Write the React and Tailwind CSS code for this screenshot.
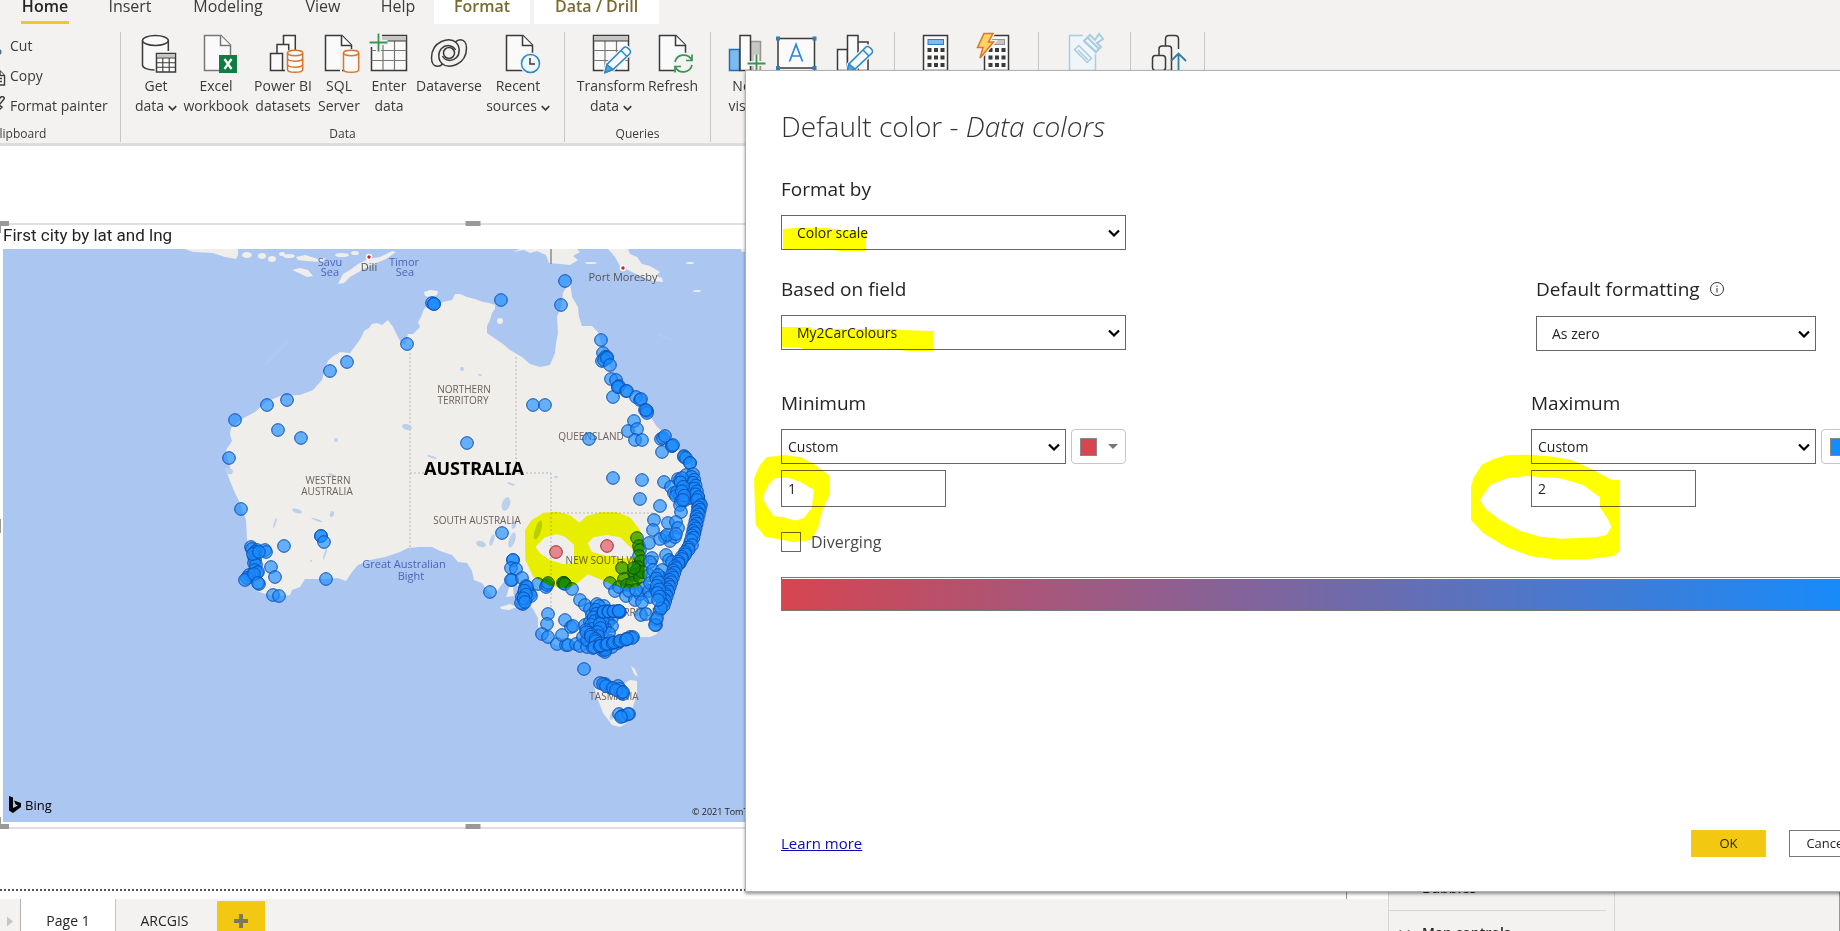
import React from "react";

const INK = "#3b3a39";
const GREEN = "#3a9455";
const BLUE = "#2b88c8";
const ORANGE = "#d9762b";

/* ---------- ribbon icons ---------- */

function Icon({ children }) {
  return (
    <svg viewBox="0 0 40 40" className="h-10 w-10 shrink-0 overflow-visible" fill="none" stroke={INK} strokeWidth="1.5" aria-hidden="true">
      {children}
    </svg>
  );
}

function Doc({ x = 6, stroke = INK }) {
  return (
    <g transform={`translate(${x} 0)`} stroke={stroke} fill="#fafafa">
      <path d="M0.5 2.5H17L26.500 12V37.500H0.500Z" />
      <path d="M16.500 2.500V12.500H26.500" />
    </g>
  );
}

function Cylinder({ bands }) {
  return (
    <g stroke={ORANGE} fill="#fbfaf8">
      <path d="M24.500 20V36.500C24.500 38.300 28 39.300 32 39.300S39.700 38.300 39.700 36.500V20" />
      <ellipse cx="32.100" cy="20" rx="7.600" ry="2.700" />
      {bands && <path d="M24.500 25.500C25 29 39 29 39.700 25.500M24.500 31.500C25 35 39 35 39.700 31.500" fill="none" />}
    </g>
  );
}

function Grid() {
  return (
    <g>
      <rect x="2.500" y="2.500" width="35" height="35" fill="#fafafa" />
      <rect x="3" y="3" width="34" height="5" fill="#c8c6c4" stroke="none" />
      <path d="M2.500 17.500H37.500M2.500 27.500H37.500M14 8V37M25.500 8V37" stroke="#797775" strokeWidth="1.200" />
      <path d="M2.500 8H37.500" strokeWidth="1" />
    </g>
  );
}

function Pencil({ x = 14, y = 39.5 }) {
  return (
    <g transform={`translate(${x} ${y})`}>
      <path d="M0 0L2 -8L19 -25C21 -27 27 -22 25 -19L8 -3Z" fill="#f3f2f1" stroke="#f3f2f1" strokeWidth="4" />
      <path d="M0 0L2 -8L19 -25C21 -27 27 -22 25 -19L8 -3Z" fill="#f4faff" stroke={BLUE} />
      <path d="M0 0L2 -8L8 -3Z" fill="#5aa5de" stroke={BLUE} />
      <path d="M16 -22L22 -16" stroke={BLUE} />
    </g>
  );
}

function Plus({ x, y }) {
  return (
    <g transform={`translate(${x} ${y})`}>
      <path d="M-9 0H9M0 -9V9" stroke="#f3f2f1" strokeWidth="5" />
      <path d="M-9 0H9M0 -9V9" stroke={GREEN} strokeWidth="1.800" />
    </g>
  );
}

function Keys({ x }) {
  return (
    <g fill={INK} stroke="none">
      {[15, 22.5, 30].map((y) => [0, 6.5, 13].map((dx) => <rect key={`${y}-${dx}`} x={x + dx} y={y} width="4" height="4" />))}
    </g>
  );
}

const swirl = "M27.500 9.500C23 6 17 6.500 12.500 8.500C6 11.500 2.500 18 2.500 25C2.500 30 5 33.300 8.500 33.300C10.500 33.300 12.500 32.300 13.500 31C8.500 27 9 19 12.500 15.500C17 11 24 12 26.500 17";

const icons = {
  getData: (
    <Icon>
      <path d="M6.500 7.500V32C6.500 35 12 37 19 37H32.300V7.500" fill="#fafafa" stroke="none" />
      <path d="M18.500 37C12 37 6.500 35 6.500 32V7.500M32.300 7.500V18" />
      <ellipse cx="19.400" cy="7.500" rx="12.900" ry="5" fill="#fafafa" />
      <rect x="20.500" y="20.500" width="19" height="18.500" fill="#fff" />
      <rect x="21" y="21" width="18" height="3.500" fill="#c8c6c4" stroke="none" />
      <path d="M20.500 25H39.500M20.500 29.700H39.500M20.500 34.300H39.500M26.800 25V39M33.200 25V39" strokeWidth="1.100" />
    </Icon>
  ),
  excel: (
    <Icon>
      <Doc x={8} stroke="#797775" />
      <rect x="23" y="22" width="18" height="18" fill="#107c41" stroke="none" />
      <path d="M28.500 26L35.500 36M35.500 26L28.500 36" stroke="#fff" strokeWidth="2.200" />
    </Icon>
  ),
  powerBi: (
    <Icon>
      <path d="M20.500 11V2.500H32.300V17" fill="#fafafa" />
      <path d="M14 20V11.500H25.700V17" fill="#fafafa" />
      <path d="M22 37.500H7.500V20.500H19.500V37.500" fill="#fafafa" />
      <Cylinder bands />
    </Icon>
  ),
  sql: (
    <Icon>
      <Doc />
      <path d="M22 41V17H34" stroke="#f3f2f1" strokeWidth="2" />
      <Cylinder />
    </Icon>
  ),
  enter: (
    <Icon>
      <Grid />
      <rect x="0" y="0" width="13" height="14" fill="#f3f2f1" stroke="none" />
      <Plus x={9.5} y={9.5} />
    </Icon>
  ),
  dataverse: (
    <Icon>
      <path d={swirl} />
      <path d={swirl} transform="rotate(180 20 20)" />
      <circle cx="20" cy="20" r="5.500" />
    </Icon>
  ),
  recent: (
    <Icon>
      <Doc x={8} />
      <circle cx="32.500" cy="30.500" r="11" fill="#f3f2f1" stroke="none" />
      <circle cx="32.500" cy="30.500" r="9" fill="#eef7fd" stroke={BLUE} />
      <path d="M32 25V31H37" />
    </Icon>
  ),
  transform: (
    <Icon>
      <Grid />
      <Pencil />
    </Icon>
  ),
  refresh: (
    <Icon>
      <Doc />
      <circle cx="30.500" cy="30.500" r="11" fill="#f3f2f1" stroke="none" />
      <path d="M22 29A9 9 0 0 1 38.500 26.500M39 21.500V27.500H33M39 32A9 9 0 0 1 22.500 34.500M22 39.500V33.500H28" stroke={GREEN} strokeWidth="1.700" />
    </Icon>
  ),
  newVisual: (
    <Icon>
      <rect x="2.500" y="16.500" width="10" height="21" fill="#7dbbee" stroke="#1f6fb2" />
      <rect x="23.500" y="8.500" width="10" height="29" fill="#c8c6c4" stroke="#979593" />
      <rect x="13" y="2.500" width="10.500" height="35" fill="#fafafa" />
      <Plus x={29.5} y={30.5} />
    </Icon>
  ),
  textBox: (
    <Icon>
      <rect x="2" y="5.500" width="36.500" height="29.500" fill="#fafafa" />
      <path d="M13.500 28.500L20 11.500L26.500 28.500M16 23H24" stroke="#2b88d8" strokeWidth="1.700" />
      <g fill="#2f7fb5" stroke="none">
        <rect x="0" y="3.500" width="4" height="4" />
        <rect x="36.500" y="3.500" width="4" height="4" />
        <rect x="0" y="33" width="4" height="4" />
        <rect x="36.500" y="33" width="4" height="4" />
      </g>
    </Icon>
  ),
  editVisual: (
    <Icon>
      <rect x="2.500" y="16.500" width="10" height="21" fill="#fafafa" />
      <rect x="22.500" y="9" width="10.500" height="28.500" fill="#fafafa" />
      <rect x="12.500" y="2.500" width="10.500" height="35" fill="#fafafa" />
      <Pencil x={12} y={39} />
    </Icon>
  ),
  measure: (
    <Icon>
      <rect x="8.500" y="2.500" width="24" height="35" fill="#fafafa" />
      <rect x="13" y="6.500" width="15.500" height="5" fill="#7dbbee" stroke="#2b7cd3" strokeWidth="1" />
      <Keys x={12.5} />
    </Icon>
  ),
  quick: (
    <Icon>
      <rect x="11.500" y="2.500" width="24" height="35" fill="#fafafa" />
      <rect x="16" y="6.500" width="15.500" height="5" fill="#c8c6c4" stroke="#979593" strokeWidth="1" />
      <Keys x={15.5} />
      <path d="M11 0.500H20L15.500 9H20.500L7 25L10 14.500H4.500Z" fill="#f3f2f1" stroke="#f3f2f1" strokeWidth="4" />
      <path d="M11 0.500H20L15.500 9H20.500L7 25L10 14.500H4.500Z" fill="#fdd267" stroke={ORANGE} />
    </Icon>
  ),
  sensitivity: (
    <Icon>
      <g stroke="#a9cde0">
        <path d="M17 2.500H3.500V37.500H29.500V21" fill="#eff5f8" />
        <rect x="-9" y="-3" width="18" height="6" transform="translate(17 21) rotate(45)" fill="#eff5f8" />
        <path d="M12 17L22 27" />
        <path d="M18 8L24 2L29 7L33 1L37 6L31 10L35 14L30 19Z" fill="#eff5f8" strokeWidth="2" />
        <path d="M18 8L30 19M22 5L33 16" strokeWidth="2" />
      </g>
    </Icon>
  ),
  publish: (
    <Icon>
      <path d="M16.500 13V6C16.500 4 18 2.500 20 2.500H26C28 2.500 29.500 4 29.500 6V16" />
      <path d="M10 22V16C10 14.500 11 13 13 13H19.500C21.500 13 22.500 14.500 22.500 16V37.500" />
      <rect x="3.500" y="22.500" width="13" height="15" rx="3" />
      <path d="M16.500 37.500H22.500" />
      <path d="M29.500 39V20.500M22 28L29.500 20.500L37 28" stroke="#2f7fa8" strokeWidth="1.800" />
    </Icon>
  ),
};

function Chevron({ className }) {
  return (
    <svg viewBox="0 0 12 8" className={className} fill="none" stroke="currentColor" strokeWidth="2.200" aria-hidden="true">
      <path d="M1 1.500L6 6.500L11 1.500" />
    </svg>
  );
}

/* ---------- ribbon ---------- */

function Tool({ icon, name, lines = [], menu, width }) {
  return (
    <button type="button" aria-label={name} className={`flex flex-col items-center ${width}`}>
      {icons[icon]}
      <span className="mt-[3px] flex flex-col items-center whitespace-nowrap text-sm leading-5">
        {lines.map((line, i) => (
          <span key={line} className="flex items-center gap-1">
            {line}
            {menu && i === lines.length - 1 && <Chevron className="mt-1 h-[6px] w-[9px]" />}
          </span>
        ))}
      </span>
    </button>
  );
}

function Group({ caption, className, inset, children }) {
  return (
    <section className={`flex shrink-0 flex-col border-r border-[#c8c6c4] ${className}`}>
      <div className={`flex h-[94px] items-start pt-px ${inset}`}>{children}</div>
      {caption && <p className="whitespace-nowrap text-center text-xs leading-4">{caption}</p>}
    </section>
  );
}

const tabs = [
  { name: "Home", style: "ml-[21px] w-12 font-semibold border-b-3 border-[#ebc92b] text-[#252423]" },
  { name: "Insert", style: "ml-[38px] w-[46px]" },
  { name: "Modeling", style: "ml-[38px] w-[74px]" },
  { name: "View", style: "ml-[39px] w-[38px]" },
  { name: "Help", style: "ml-[38px] w-[36px]" },
  { name: "Format", style: "ml-[18px] w-24 bg-white font-semibold text-[#7a6a30]" },
  { name: "Data / Drill", style: "ml-1 w-[125px] bg-white font-semibold text-[#7a6a30]" },
];

function Ribbon() {
  return (
    <header className="shrink-0 overflow-hidden border-b-3 border-[#dddcdb] bg-[#f3f2f1] text-[#3b3a39]">
      <nav className="flex h-6 items-start">
        {tabs.map((t) => (
          <button key={t.name} type="button" className={`flex h-6 shrink-0 items-start justify-center whitespace-nowrap text-base leading-3 ${t.style}`}>
            {t.name}
          </button>
        ))}
      </nav>
      <div className="flex h-[119px] pt-2 pb-px">
        <section className="flex w-[121px] shrink-0 flex-col border-r border-[#c8c6c4] text-sm">
          <div className="-ml-3.5 flex h-[94px] flex-col items-start">
            <button type="button" className="flex h-7 items-center gap-1 pr-2">
              <svg viewBox="0 0 20 20" className="h-5 w-5" fill="none" aria-hidden="true">
                <path d="M4 2L11 12M12 2L5 12" stroke={INK} strokeWidth="1.400" />
                <circle cx="12.500" cy="16" r="2.300" stroke="#4d6f94" strokeWidth="1.600" />
              </svg>
              Cut
            </button>
            <button type="button" className="flex h-8 items-center gap-1 pr-2">
              <svg viewBox="0 0 20 20" className="h-5 w-5" fill="#fff" stroke={INK} strokeWidth="1.400" aria-hidden="true">
                <path d="M2 1H10V14H2Z" />
                <path d="M8 5H14L18.500 9.500V19H8Z" />
                <path d="M14 5V9.500H18.500M11 12.500H16M11 15.500H16" />
              </svg>
              Copy
            </button>
            <button type="button" className="flex h-7 items-center gap-1 whitespace-nowrap">
              <svg viewBox="0 0 20 20" className="h-5 w-5" fill="none" stroke={INK} strokeWidth="1.500" aria-hidden="true">
                <path d="M10 7L15 1C16 0 19 1 18 3L13 9M9 6L16 11L11 16C8 18 5 15 4 13Z" />
              </svg>
              Format painter
            </button>
          </div>
          <p className="-ml-2 text-xs leading-4">Clipboard</p>
        </section>
        <Group caption="Data" className="w-[444px]" inset="pl-2">
          <Tool icon="getData" lines={["Get", "data"]} menu width="w-[54px]" />
          <Tool icon="excel" lines={["Excel", "workbook"]} width="w-[66px]" />
          <Tool icon="powerBi" lines={["Power BI", "datasets"]} width="w-[68px]" />
          <Tool icon="sql" lines={["SQL", "Server"]} width="w-11" />
          <Tool icon="enter" lines={["Enter", "data"]} width="w-14" />
          <Tool icon="dataverse" lines={["Dataverse"]} width="w-16" />
          <Tool icon="recent" lines={["Recent", "sources"]} menu width="w-[74px]" />
        </Group>
        <Group caption="Queries" className="w-[146px]" inset="pl-[13px]">
          <Tool icon="transform" lines={["Transform", "data"]} menu width="w-[66px]" />
          <Tool icon="refresh" lines={["Refresh"]} width="w-[58px]" />
        </Group>
        <Group className="w-[184px]" inset="pl-[9px]">
          <Tool icon="newVisual" lines={["New", "visual"]} width="w-[54px]" />
          <Tool icon="textBox" name="Text box" width="w-11" />
          <Tool icon="editVisual" name="More visuals" width="w-[74px]" />
        </Group>
        <Group className="w-[144px]" inset="pl-[11px]">
          <Tool icon="measure" name="New measure" width="w-[58px]" />
          <Tool icon="quick" name="Quick measure" width="w-[58px]" />
        </Group>
        <Group className="w-[92px]" inset="pl-2">
          <Tool icon="sensitivity" name="Sensitivity" width="w-[78px]" />
        </Group>
        <Group className="w-[74px]" inset="pl-2">
          <Tool icon="publish" name="Publish" width="w-[60px]" />
        </Group>
      </div>
    </header>
  );
}

/* ---------- map ---------- */

const mainland =
  "231 428 240 420 255 412 266 402 280 396 300 395 313 390 322 380 325 368 328 361 332 357 340 352 350 353 356 345 361 338 364 331 369 328 372 324 377 323 382 325 388 320 393 327 396 333 400 341 405 345 408 334 413 334 417 330 420 327 418 322 421 317 424 309 430 305 437 304 443 302 452 300 455 294 460 294 467 297 475 299 483 302 489 303 495 305 495 309 492 313 490 320 487 326 487 333 497 340 503 344 510 350 522 357 530 364 540 367 550 365 555 353 556 343 558 333 557 317 561 307 563 293 567 286 570 282 572 297 578 307 579 317 582 326 592 326 598 332 603 350 607 362 612 372 617 380 628 389 637 397 644 405 650 416 657 427 662 431 670 440 680 453 690 460 694 477 698 493 704 503 702 512 697 530 690 550 680 567 670 590 662 610 658 627 657 634 650 637 640 637 627 643 618 645 612 651 607 653 598 648 590 647 585 643 580 650 573 647 560 647 552 643 545 638 538 627 538 618 533 609 529 605 521 608 516 603 519 594 517 582 513 588 514 596 506 597 509 588 509 578 504 582 499 588 496 594 492 596 487 590 482 583 474 580 472 571 467 563 458 562 452 555 440 551 432 547 420 547 408 548 400 552 385 557 370 560 358 565 352 572 346 581 338 578 327 579 305 579 300 587 292 590 290 595 277 597 262 593 255 590 254 580 257 570 252 556 247 540 246 520 240 503 235 493 230 481 226 470 232 474 228 460 226 450 232 441 230 434";

const otherLand = [
  "185 249 193 252 213 253 225 257 236 259 238 255 238 249",
  "513 252 524 250 530 253 537 251 546 255 549 263 560 264 570 265 578 260 573 256 580 252 577 249 520 249",
  "608 249 615 257 620 266 630 271 640 276 653 281 663 282 662 278 656 276 660 272 650 266 642 264 637 257 630 254 628 249",
  "338 284 343 274 350 270 358 264 368 259 380 257 392 251 396 252 386 259 374 264 362 270 350 277 344 283",
  "292 270 300 268 308 270 313 276 307 277 299 273",
  "296 257 305 255 318 259 326 258 322 262 306 261 298 260",
  "424 292 430 290 438 291 437 295 430 297 425 296",
  "500 607 510 604 517 607 509 610 501 609",
  "594 680 600 684 610 686 623 684 630 680 637 681 637 694 632 710 627 723 620 727 612 725 603 713 598 700 595 690",
  "631 666 635 669 638 677 634 674",
];

const islands = [
  [247, 255, 5, 3], [262, 256, 4, 3], [272, 259, 4, 3], [282, 254, 3, 2], [289, 256, 6, 2], [342, 255, 7, 2],
  [355, 253, 4, 2], [500, 321, 3, 3], [591, 263, 6, 1], [690, 263, 4, 1], [697, 291, 4, 1], [744, 250, 3, 2],
];

const lakes = [
  [336, 440, 2, 2], [297, 511, 5, 2], [332, 514, 2, 3], [317, 520, 6, 1], [275, 523, 1, 5], [332, 475, 4, 1],
  [407, 427, 5, 3], [432, 457, 5, 1], [462, 369, 2, 2], [480, 375, 2, 1], [506, 504, 4, 7], [511, 484, 4, 1],
  [514, 525, 2, 4], [481, 544, 5, 3], [492, 540, 2, 6], [538, 530, 3, 10], [512, 540, 3, 8], [556, 477, 2, 1],
  [325, 554, 1, 6], [311, 561, 1, 1], [229, 471, 4, 3], [612, 716, 2, 4],
];

/* Dense runs of coastal markers, as [start, end, count]. */
const runs = [
  [[692, 474], [698, 500], 10],
  [[700, 505], [692, 540], 16],
  [[691, 545], [676, 566], 10],
  [[675, 568], [662, 608], 18],
  [[657, 575], [659, 600], 8],
  [[681, 478], [684, 500], 6],
  [[598, 606], [588, 640], 10],
  [[604, 612], [596, 640], 8],
  [[585, 630], [606, 650], 10],
  [[592, 648], [628, 639], 12],
  [[602, 612], [620, 611], 8],
  [[526, 587], [524, 602], 5],
  [[602, 684], [622, 692], 5],
];

const runDots = runs.flatMap(([[x1, y1], [x2, y2], n]) =>
  Array.from({ length: n }, (_, i) => {
    const t = i / (n - 1);
    const sway = i % 2 === 0 ? 1 : -1;
    return [x1 + (x2 - x1) * t + sway, y1 + (y2 - y1) * t];
  })
);

const blueDots = [
  [235, 420], [267, 405], [287, 400], [330, 371], [347, 362], [278, 430], [301, 438], [229, 458], [241, 509], [284, 546],
  [321, 536], [321, 536], [324, 542], [326, 579], [271, 567], [275, 577], [273, 595], [279, 596], [259, 584],
  [251, 547], [252, 549], [257, 550], [265, 550], [266, 552], [255, 552], [254, 557], [255, 560], [254, 563],
  [256, 565], [255, 570], [257, 573], [258, 572], [252, 575], [249, 575], [247, 578], [245, 580], [254, 574],
  [258, 583], [253, 554], [259, 552],
  [432, 303], [434, 304], [434, 304], [501, 300], [565, 281], [561, 305], [407, 344],
  [601, 340], [603, 353], [602, 361], [605, 357], [607, 357], [604, 360], [607, 358], [610, 365], [611, 379], [616, 380],
  [613, 397], [618, 387], [619, 386], [618, 387], [626, 391], [627, 391], [636, 397], [640, 400], [641, 399], [645, 410],
  [647, 411], [647, 413], [646, 410], [634, 421], [628, 431], [637, 429], [635, 440], [642, 440], [533, 405], [545, 405],
  [467, 443], [589, 439], [613, 478], [642, 480], [640, 499], [660, 506], [664, 482], [671, 487], [662, 452], [661, 439],
  [663, 438], [665, 436], [672, 446], [672, 446], [673, 445], [684, 456], [684, 457], [686, 458], [690, 463], [690, 463],
  [692, 483], [694, 490], [698, 497], [697, 500], [699, 505], [699, 508],
  [700, 503], [694, 495], [690, 498], [698, 502], [695, 497], [678, 479], [680, 480], [674, 493], [677, 492], [683, 493],
  [680, 495], [676, 496], [681, 501], [680, 505], [687, 492], [688, 488], [685, 500], [681, 512], [686, 475],
  [502, 533], [513, 560], [513, 560], [511, 568], [516, 569], [512, 580], [511, 580], [522, 578], [490, 592],
  [525, 588], [527, 590], [524, 593], [528, 596], [522, 597], [525, 600], [523, 604], [530, 594], [526, 586], [521, 603],
  [531, 596], [538, 584], [546, 587], [547, 585], [548, 583], [564, 583], [564, 583], [563, 583], [565, 584], [572, 589],
  [637, 538], [639, 546], [640, 550], [639, 556], [641, 561], [638, 567], [622, 568], [634, 573], [637, 570],
  [624, 579], [635, 575], [610, 583], [615, 591], [619, 587], [627, 585], [632, 583], [640, 577], [642, 572], [634, 568],
  [626, 596], [629, 591], [635, 600], [640, 594], [644, 588], [649, 591], [650, 597], [642, 602], [636, 590],
  [654, 520], [653, 530], [649, 543], [668, 523], [676, 522], [678, 528], [665, 537], [670, 541], [675, 537], [660, 539],
  [667, 535], [652, 558], [650, 562], [649, 575], [653, 570], [650, 583], [666, 555], [669, 560], [672, 562], [676, 534],
  [698, 507], [697, 516], [694, 530], [690, 543], [688, 548],
  [686, 552], [684, 556], [681, 560], [680, 563], [660, 610], [656, 620], [656, 625], [655, 625], [657, 618],
  [664, 590], [660, 580], [662, 570], [656, 590], [662, 578], [641, 615], [646, 614],
  [548, 614], [547, 624], [542, 634], [548, 637], [557, 644], [566, 645], [568, 645], [562, 635], [565, 620], [571, 627],
  [573, 626], [576, 644], [580, 646], [580, 600], [585, 605], [590, 609], [597, 604], [604, 606], [607, 611], [603, 615],
  [592, 615], [610, 612], [618, 611], [620, 612], [612, 618], [619, 612], [608, 622],
  [612, 626], [605, 628], [585, 625], [590, 622], [594, 640], [588, 640], [596, 633],
  [600, 632], [603, 637], [604, 646], [587, 647], [602, 650], [606, 649],
  [611, 641], [609, 633], [583, 637], [602, 625], [605, 652], [612, 647],
  [618, 643], [626, 639], [630, 637], [633, 637], [632, 638],
  [584, 669], [600, 683], [605, 684], [611, 688], [618, 686], [620, 689], [622, 692], [623, 694],
  [621, 693], [619, 714], [622, 716], [624, 716], [629, 714], [628, 714], [621, 717],
  ...runDots,
];

const redDots = [[556, 552], [607, 546]];

const mapLabels = [
  ["WESTERN", 328, 484, "state"], ["AUSTRALIA", 327, 495, "state"], ["NORTHERN", 464, 393, "state"], ["TERRITORY", 463, 404, "state"],
  ["QUEENSLAND", 591, 440, "state"], ["SOUTH AUSTRALIA", 477, 524, "state"], ["NEW SOUTH WALES", 612, 564, "state"],
  ["TERRITORY", 638, 616, "state"], ["TASMANIA", 614, 700, "state"],
  ["Savu", 330, 266, "sea"], ["Sea", 330, 276, "sea"], ["Timor", 404, 266, "sea"], ["Sea", 405, 276, "sea"],
  ["Great Australian", 404, 568, "sea"], ["Bight", 411, 580, "sea"],
  ["Dili", 369, 271, "town"], ["Port Moresby", 623, 281, "town"],
];

const labelStyle = {
  state: "fill-[#6b605c] text-[10px]",
  sea: "fill-[#4c63b8] text-[11px]",
  town: "fill-[#555555] text-[11px]",
};

function AustraliaMap() {
  return (
    <svg viewBox="3 249 942 573" preserveAspectRatio="xMinYMin slice" className="block h-[573px] w-full" role="img" aria-label="Map of Australia with city markers">
      <rect x="3" y="249" width="942" height="573" fill="#acc6f2" />
      <g fill="#efeeeb">
        <polygon points={mainland} />
        {otherLand.map((p) => <polygon key={p} points={p} />)}
        {islands.map(([x, y, rx, ry]) => <ellipse key={`${x}-${y}`} cx={x} cy={y} rx={rx} ry={ry} />)}
      </g>
      <g fill="#bccfeb">
        {lakes.map(([x, y, rx, ry]) => <ellipse key={`${x}-${y}`} cx={x} cy={y} rx={rx} ry={ry} transform={`rotate(18 ${x} ${y})`} />)}
      </g>
      <path d="M265 365L288 342M658 334L671 340" stroke="#b9cdec" />
      <path d="M410 345V550M516 357V473M410 473H551M551 473V645M551 513H652L668 520" fill="none" stroke="#c9c7c5" strokeDasharray="2 2" strokeWidth="1.500" />
      <path d="M551 249V264" stroke="#8f8a88" strokeWidth="1.500" />
      <g textAnchor="middle">
        {mapLabels.map(([text, x, y, kind]) => (
          <text key={`${text}-${x}-${y}`} x={x} y={y} className={labelStyle[kind]}>{text}</text>
        ))}
        <text x="474" y="475" className="fill-black text-[18px] font-bold [font-family:'Noto_Sans',sans-serif]">AUSTRALIA</text>
      </g>
      {[[369, 257], [623, 268]].map(([x, y]) => (
        <circle key={x} cx={x} cy={y} r="2.500" fill="#c8202c" stroke="#fff" strokeWidth="1.500" />
      ))}
      <g fill="#1a8cff" fillOpacity="0.65" stroke="#0b50b4" strokeWidth="1">
        {blueDots.map(([x, y], i) => <circle key={i} cx={x} cy={y} r="6.300" />)}
      </g>
      <g fill="#e0505c" fillOpacity="0.650" stroke="#9c2632" strokeWidth="1">
        {redDots.map(([x, y]) => <circle key={x} cx={x} cy={y} r="6.300" />)}
      </g>
      <path d="M9 796L13 797.500V808L18 805.500L15.500 804.300L14 800.500L21 803V807L13 813L9 810.500Z" fill="#000" />
      <text x="25" y="810" className="fill-black text-[13px]">Bing</text>
      <text x="692" y="815" className="fill-[#222222] text-[9px]">© 2021 TomTom</text>
    </svg>
  );
}

function MapVisual() {
  return (
    <article className="relative mt-[77px] w-[945px] border-y-2 border-[#e1dfdd] pb-[5px]">
      <h2 className="h-6 pl-[3px] text-[17px] leading-5 text-[#252423] [font-family:Roboto,sans-serif]">First city by lat and lng</h2>
      <div className="pl-[3px]">
        <AustraliaMap />
      </div>
      <span className="absolute -top-1 left-0 h-[5px] w-[9px] bg-[#999999]" />
      <span className="absolute -top-1 left-0 h-3 w-px bg-[#999999]" />
      <span className="absolute -top-1 left-1/2 h-[5px] w-[15px] -translate-x-1/2 bg-[#999999]" />
      <span className="absolute top-1/2 left-0 h-[14px] w-px -translate-y-1/2 bg-[#999999]" />
      <span className="absolute -bottom-0.5 left-0 h-[5px] w-[9px] bg-[#999999]" />
      <span className="absolute -bottom-0.5 left-0 h-3 w-px bg-[#999999]" />
      <span className="absolute -bottom-0.5 left-1/2 h-[5px] w-[15px] -translate-x-1/2 bg-[#999999]" />
    </article>
  );
}

/* ---------- workspace ---------- */

function PageTabs() {
  return (
    <footer className="flex h-8 shrink-0 overflow-hidden bg-[#f3f2f1] text-sm text-[#252423]">
      <button type="button" aria-label="Next page" className="flex h-11 w-[21px] items-center justify-center border-r border-[#b3b0ad]">
        <svg viewBox="0 0 6 10" className="h-[11px] w-[6px]" fill="#c8c6c4" aria-hidden="true">
          <path d="M0 0L6 5L0 10Z" />
        </svg>
      </button>
      <button type="button" className="h-11 w-[95px] border-r border-[#c8c6c4] bg-white font-medium">Page 1</button>
      <button type="button" className="h-11 w-[101px] pr-1">ARCGIS</button>
      <button type="button" aria-label="New page" className="mt-0.5 flex h-10 w-12 items-center justify-center bg-[#f2c811]">
        <svg viewBox="0 0 14 14" className="h-[14px] w-[14px]" stroke="#7d7663" strokeWidth="4" aria-hidden="true">
          <path d="M7 0V14M0 7H14" />
        </svg>
      </button>
    </footer>
  );
}

function SidePanels() {
  return (
    <aside className="flex shrink-0 bg-[#f3f2f1] text-sm font-semibold text-[#252423]">
      <div className="flex w-[226px] flex-col justify-end overflow-hidden border-l border-[#d8d6d4] pr-2">
        <p className="pl-[33px] leading-5">Bubbles</p>
        <div className="mt-3 -mb-4 flex h-[37px] items-center gap-[11px] border-t border-[#d8d6d4] pt-2 pl-[9px]">
          <Chevron className="h-2 w-[13px] text-[#605e5c]" />
          <p>Map controls</p>
        </div>
      </div>
      <div className="w-[226px] border-x border-l-[#d8d6d4] border-r-[#979593]" />
    </aside>
  );
}

/* ---------- dialog ---------- */

function Select({ id, label, value, width, inset = "pl-3", hidden }) {
  return (
    <div className={`relative ${width}`}>
      {hidden && <label htmlFor={id} className="sr-only">{label}</label>}
      <select id={id} defaultValue={value} className={`block h-[35px] w-full appearance-none border border-[#666666] bg-white pt-px pr-8 text-sm text-[#252423] ${inset}`}>
        <option>{value}</option>
      </select>
      <Chevron className="pointer-events-none absolute top-[14px] right-[6px] h-2 w-3 text-black" />
    </div>
  );
}

function Bound({ id, title, value, swatch }) {
  return (
    <fieldset className="w-[345px]">
      <legend className="text-[19px] leading-6">{title}</legend>
      <div className="mt-[14px] flex gap-[5px]">
        <Select id={`${id}-mode`} label={`${title} type`} value="Custom" width="w-[285px]" inset="pl-[6px]" hidden />
        <button type="button" aria-label={`${title} color`} className="flex h-[35px] w-[55px] items-center gap-[11px] rounded-sm border border-[#c8c6c4] pl-2">
          <span className={`h-[18px] w-[17px] border border-[#8a8886] ${swatch}`} />
          <svg viewBox="0 0 10 5" className="h-[5px] w-[10px]" fill="#777777" aria-hidden="true">
            <path d="M0 0H10L5 5Z" />
          </svg>
        </button>
      </div>
      <input type="text" aria-label={`${title} value`} defaultValue={value} className="mt-[6px] block h-[37px] w-[165px] border border-[#666666] bg-white px-[6px] text-sm" />
    </fieldset>
  );
}

function Dialog() {
  return (
    <div role="dialog" aria-labelledby="dialog-title" className="absolute top-[70px] -right-[72px] bottom-[39px] left-[745px] flex flex-col border border-[#b3b0ad] bg-white px-[35px] pt-[35px] pb-[34px] text-[#252423] shadow-[0_2px_3px_rgba(0,0,0,0.4)]">
      <h1 id="dialog-title" className="text-[28px] leading-10 font-light text-[#333333]">
        Default color - <em>Data colors</em>
      </h1>
      <label htmlFor="format-by" className="mt-[31px] text-[19px] leading-6">Format by</label>
      <div className="mt-[14px]">
        <Select id="format-by" value="Color scale" width="w-[345px]" inset="pl-[15px]" />
      </div>
      <div className="mt-[27px] flex justify-between">
        <div className="flex w-[345px] flex-col gap-[14px]">
          <label htmlFor="based-on" className="text-[19px] leading-6">Based on field</label>
          <Select id="based-on" value="My2CarColours" width="w-[345px]" inset="pl-[15px]" />
        </div>
        <div className="flex w-[340px] flex-col gap-[15px]">
          <div className="flex items-center gap-[10px]">
            <label htmlFor="default-format" className="text-[19px] leading-6">Default formatting</label>
            <svg viewBox="0 0 14 14" className="h-[14px] w-[14px]" fill="none" stroke="#333" strokeWidth="1" aria-hidden="true">
              <circle cx="7" cy="7" r="6.500" />
              <path d="M7 6V10.500M7 3.500V4.800" />
            </svg>
          </div>
          <Select id="default-format" value="As zero" width="w-[280px]" inset="pl-[15px]" />
        </div>
      </div>
      <div className="mt-10 flex justify-between">
        <Bound id="minimum" title="Minimum" value="1" swatch="bg-[#d64550]" />
        <Bound id="maximum" title="Maximum" value="2" swatch="bg-[#118dff]" />
      </div>
      <label className="mt-[25px] flex h-5 items-center gap-[10px] text-base text-[#4a4a4a]">
        <input type="checkbox" className="h-5 w-5 appearance-none border border-[#666666] bg-white" />
        Diverging
      </label>
      <div className="mt-[25px] h-[34px] shrink-0 border border-[#777777] bg-white pt-px">
        <div className="h-full bg-linear-to-r/srgb from-[#d64550] to-[#118dff]" />
      </div>
      <div className="mt-auto flex items-center">
        <a href="#learn-more" className="text-[15px] text-[#0b0bb4] underline">Learn more</a>
        <button type="button" className="ml-auto h-[27px] w-[75px] bg-[#f2c811] text-[13px]">OK</button>
        <button type="button" className="mr-3 ml-[23px] h-[27px] w-[75px] border border-[#797775] text-[13px]">Cancel</button>
      </div>
    </div>
  );
}

/* Translucent highlighter strokes drawn over the whole window. */
function Highlights() {
  return (
    <svg viewBox="0 0 1840 931" preserveAspectRatio="xMinYMin slice" className="pointer-events-none absolute top-0 left-0 h-[931px] w-[1840px] mix-blend-multiply" fill="#ffff00" fillRule="evenodd" aria-hidden="true">
      <path d="M783 229L795 228H826L840 230L866 231V251H840L825 249H800L783 250Z" />
      <path d="M782 327H810L812 329H895L900 330L933 331V351H910L885 349H802V348L782 347Z" />
      <g transform="translate(740 380) scale(0.33333)">
        <path d="M42 295L60 255L80 232L130 225L185 232L230 258L270 288L268 345L245 395L235 440L215 480L160 487L120 478L75 470L47 435ZM67 355L85 315L105 295L140 292L180 305L222 330L215 385L190 415L165 422L130 412L100 408L85 385Z" />
      </g>
      <g transform="translate(1440 260) scale(0.33333)">
        <path d="M93 680L100 655L125 615L160 597L200 586L270 584L340 590L395 600L460 630L515 660H537V875L520 888L480 893L440 898H340L270 888L200 862L130 820L93 780ZM120 720L150 675L200 655L260 648L360 655L430 675L480 712V742L505 780L514 800L500 825L470 832L360 836L300 830L240 812L180 780L135 745Z" />
      </g>
      <g transform="translate(440 480) scale(0.33333)" fill="#f8ff00">
        <path d="M255 150L275 120L310 98L350 95L390 105L418 128L440 108L480 97H530L570 112L600 150L612 190L615 290L600 318L560 326L520 315L480 298L443 283L410 312L380 325L330 318L280 290L256 240ZM287 200L315 172L350 163L375 170L402 195V250L370 253L330 240L300 220ZM443 190L460 172L500 165L540 172L575 205L590 235H545L500 228L455 215Z" />
      </g>
    </svg>
  );
}

export default function App() {
  return (
    <div className="relative flex h-screen flex-col overflow-hidden bg-white [font-family:'Open_Sans','Noto_Sans',sans-serif]">
      <Ribbon />
      <div className="flex min-h-0 flex-1">
        <div className="flex min-w-0 flex-1 flex-col">
          <main className="mr-[41px] flex min-h-0 flex-1 flex-col border-r border-[#979593]">
            <MapVisual />
            <div className="mt-auto mb-2 border-t-2 border-dotted border-[#555555]" />
          </main>
          <PageTabs />
        </div>
        <SidePanels />
      </div>
      <Dialog />
      <Highlights />
    </div>
  );
}
